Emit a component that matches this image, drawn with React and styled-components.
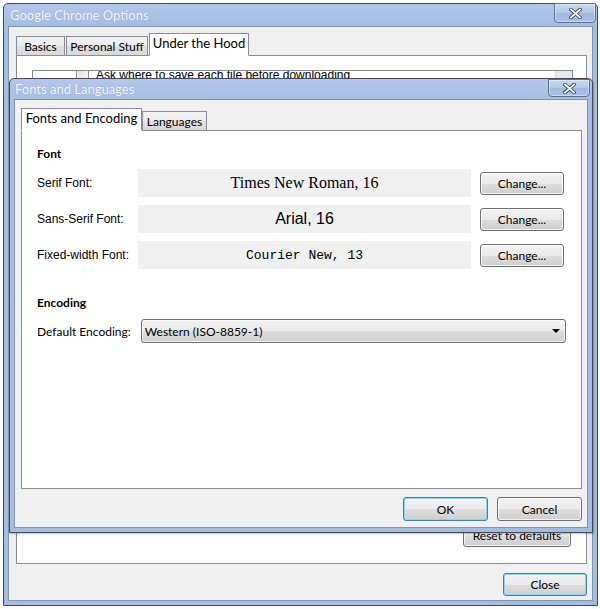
import React from 'react';
import styled, { createGlobalStyle, css } from 'styled-components';

const GlobalStyle = createGlobalStyle`
  html, body { margin: 0; padding: 0; background: #fff; }
  body {
    font-family: Lato, "Liberation Sans", sans-serif;
    font-size: 12px;
    color: #000;
  }
  * { box-sizing: border-box; }
`;

const Page = styled.div`
  position: relative;
  width: 600px;
  height: 609px;
  overflow: hidden;
`;

const frame = css`
  display: flex;
  flex-direction: column;
  border: 1px solid #434a54;
  border-radius: 5px 5px 0 0;
  background: linear-gradient(#b2c7ea, #a7bee4 20px, #a5bce2);
  padding: 0 4px 4px;
`;

const Window = styled.div`
  ${frame}
  margin: 3px 0 0 3px;
  width: 595px;
  height: 603px;
`;

const Dialog = styled.div`
  ${frame}
  position: absolute;
  left: 9px;
  top: 78px;
  width: 584px;
  height: 455px;
  box-shadow: 1px 1px 2px rgba(0, 0, 0, 0.25);
`;

const TitleBar = styled.div`
  height: ${p => p.$h}px;
  display: flex;
  align-items: flex-start;
  justify-content: space-between;
  flex-shrink: 0;
`;

const TitleText = styled.div`
  align-self: center;
  padding-left: ${p => p.$indent}px;
  font-size: 13px;
  color: #f6f6f6;
  text-shadow: 0 0 1px rgba(60, 80, 110, 0.35);
`;

const CloseBox = styled.div`
  width: 42px;
  height: ${p => p.$h}px;
  margin-top: ${p => p.$top}px;
  margin-right: ${p => p.$right}px;
  border: 1px solid #5e6f89;
  border-radius: 0 0 4px 4px;
  background: linear-gradient(#c9d8f0, #b3c7e8 50%, #a3bae0 51%, #a9c0e5);
  box-shadow: inset 0 0 0 1px rgba(255, 255, 255, 0.4);
  display: flex;
  align-items: center;
  justify-content: center;
`;

const Client = styled.div`
  flex: 1;
  display: flex;
  flex-direction: column;
  background: #f0f0f0;
  border: 1px solid #8293ad;
  padding: ${p => p.$pad};
  min-height: 0;
`;

const TabStrip = styled.div`
  display: flex;
  align-items: flex-end;
  gap: ${p => p.$gap}px;
  margin-bottom: -1px;
  position: relative;
  z-index: 1;
`;

const Tab = styled.div`
  width: ${p => p.$w}px;
  height: ${p => (p.$active ? 23 : 20)}px;
  border: 1px solid #898c95;
  border-bottom: ${p => (p.$active ? '1px solid #fff' : '1px solid #898c95')};
  background: ${p => (p.$active ? '#fff' : 'linear-gradient(#f3f3f3, #ebebeb 50%, #e0e0e0 51%, #d9d9d9)')};
  display: flex;
  align-items: center;
  justify-content: center;
  padding-bottom: ${p => (p.$active ? 3 : 0)}px;
  white-space: nowrap;
  font-size: ${p => (p.$active ? 13 : 12)}px;
`;

const Panel = styled.div`
  flex: 1;
  display: flex;
  flex-direction: column;
  background: #fff;
  border: 1px solid #898c95;
  padding: ${p => p.$pad};
  min-height: 0;
`;

const ScrollBox = styled.div`
  flex: 1;
  display: flex;
  border: 1px solid #828790;
  margin-right: -2px;
  margin-bottom: 8px;
  overflow: hidden;
`;

const ScrollContent = styled.div`
  flex: 1;
  margin-top: -4px;
`;

const ScrollTrack = styled.div`
  width: 17px;
  background: #e9e9e9;
  border-left: 1px solid #dcdcdc;
`;

const CheckRow = styled.div`
  display: flex;
  align-items: center;
  gap: 7px;
  padding-left: 43px;
  height: 16px;
  font-family: "Liberation Sans", Arial, sans-serif;
  font-size: 12px;
`;

const CheckBox = styled.span`
  width: 13px;
  height: 13px;
  border: 1px solid #8e8f8f;
  background: linear-gradient(135deg, #dcdcdc, #fbfbfb);
  box-shadow: inset 0 0 0 1px #f4f4f4;
`;

const ButtonRow = styled.div`
  display: flex;
  justify-content: flex-end;
  gap: ${p => p.$gap || 0}px;
  margin-top: ${p => p.$top || 0}px;
  flex-shrink: 0;
`;

const Button = styled.button`
  width: ${p => p.$w}px;
  height: ${p => p.$h || 23}px;
  padding: 0;
  border: 1px solid ${p => (p.$primary ? '#3c7fb1' : '#707070')};
  border-radius: 3px;
  background: linear-gradient(#f2f2f2, #ebebeb 50%, #dddddd 51%, #cfcfcf);
  box-shadow: inset 0 0 0 1px ${p => (p.$primary ? '#8fd3f5' : 'rgba(255, 255, 255, 0.75)')};
  font-family: Lato, "Liberation Sans", sans-serif;
  font-size: 12px;
  color: #000;
  justify-self: end;
`;

const SectionTitle = styled.div`
  font-weight: 700;
  font-size: 12px;
  line-height: 16px;
  margin-top: ${p => p.$top}px;
  margin-bottom: ${p => p.$bottom}px;
`;

const FontGrid = styled.div`
  display: grid;
  grid-template-columns: 101px 333px 93px;
  row-gap: 8px;
  grid-auto-rows: 28px;
  align-items: center;
`;

const FieldLabel = styled.div`
  font-family: "Liberation Sans", Arial, sans-serif;
  font-size: 12px;
`;

const FontValue = styled.div`
  height: 100%;
  background: #f0f0f0;
  display: flex;
  align-items: center;
  justify-content: center;
  font-family: ${p => p.$family};
  font-size: ${p => p.$size}px;
`;

const SelectRow = styled.div`
  display: flex;
  align-items: center;
`;

const SelectLabel = styled.div`
  width: 104px;
  font-size: 12px;
`;

const Select = styled.div`
  width: 426px;
  height: 24px;
  border: 1px solid #707070;
  border-radius: 3px;
  background: linear-gradient(#f2f2f2, #ebebeb 50%, #dddddd 51%, #cfcfcf);
  box-shadow: inset 0 0 0 1px rgba(255, 255, 255, 0.7);
  display: flex;
  align-items: center;
  justify-content: space-between;
  padding: 0 4px 0 3px;
  font-size: 12px;
`;

const Arrow = styled.span`
  width: 0;
  height: 0;
  border-left: 4px solid transparent;
  border-right: 4px solid transparent;
  border-top: 4px solid #000;
  margin-right: 1px;
`;

const CloseGlyph = () => (
  <svg width="13" height="11" viewBox="0 0 13 11">
    <path d="M2 1.5 L11 9.5 M11 1.5 L2 9.5" stroke="#3b4656" strokeWidth="3.6" strokeLinecap="square" />
    <path d="M2 1.5 L11 9.5 M11 1.5 L2 9.5" stroke="#fff" strokeWidth="1.8" strokeLinecap="square" />
  </svg>
);

const fonts = [
  { label: 'Serif Font:', value: 'Times New Roman, 16', family: '"Liberation Serif", serif', size: 16 },
  { label: 'Sans-Serif Font:', value: 'Arial, 16', family: '"Liberation Sans", sans-serif', size: 16 },
  { label: 'Fixed-width Font:', value: 'Courier New, 13', family: '"Liberation Mono", monospace', size: 13 },
];

export default function App() {
  return (
    <Page>
      <GlobalStyle />
      <Window>
        <TitleBar $h={22}>
          <TitleText $indent={2}>Google Chrome Options</TitleText>
          <CloseBox $h={20} $top={-1} $right={-3}>
            <CloseGlyph />
          </CloseBox>
        </TitleBar>
        <Client $pad="6px 5px 4px 7px">
          <TabStrip $gap={1}>
            <Tab $w={49}>Basics</Tab>
            <Tab $w={82}>Personal Stuff</Tab>
            <Tab $w={100} $active>Under the Hood</Tab>
          </TabStrip>
          <Panel $pad="14px 15px 16px 15px">
            <ScrollBox>
              <ScrollContent>
                <CheckRow>
                  <CheckBox />
                  Ask where to save each file before downloading
                </CheckRow>
              </ScrollContent>
              <ScrollTrack />
            </ScrollBox>
            <ButtonRow>
              <Button $w={108}>Reset to defaults</Button>
            </ButtonRow>
          </Panel>
          <ButtonRow $top={9}>
            <Button $w={84} $primary>Close</Button>
          </ButtonRow>
        </Client>
      </Window>

      <Dialog>
        <TitleBar $h={20}>
          <TitleText $indent={1}>Fonts and Languages</TitleText>
          <CloseBox $h={18} $top={0} $right={-2}>
            <CloseGlyph />
          </CloseBox>
        </TitleBar>
        <Client $pad="8px 5px 6px 6px">
          <TabStrip $gap={0}>
            <Tab $w={121} $active>Fonts and Encoding</Tab>
            <Tab $w={65}>Languages</Tab>
          </TabStrip>
          <Panel $pad="15px 15px 15px 15px">
            <SectionTitle $top={0} $bottom={7}>Font</SectionTitle>
            <FontGrid>
              {fonts.map(f => (
                <React.Fragment key={f.label}>
                  <FieldLabel>{f.label}</FieldLabel>
                  <FontValue $family={f.family} $size={f.size}>{f.value}</FontValue>
                  <Button $w={84}>Change...</Button>
                </React.Fragment>
              ))}
            </FontGrid>
            <SectionTitle $top={26} $bottom={8}>Encoding</SectionTitle>
            <SelectRow>
              <SelectLabel>Default Encoding:</SelectLabel>
              <Select>
                Western (ISO-8859-1)
                <Arrow />
              </Select>
            </SelectRow>
          </Panel>
          <ButtonRow $gap={9} $top={8}>
            <Button $w={85} $h={24} $primary>OK</Button>
            <Button $w={85} $h={24}>Cancel</Button>
          </ButtonRow>
        </Client>
      </Dialog>
    </Page>
  );
}
